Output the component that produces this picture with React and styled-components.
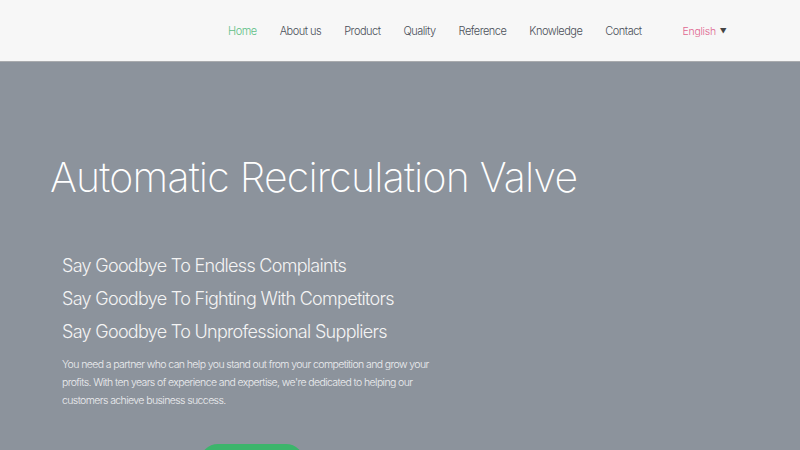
import React from "react";
import styled, { createGlobalStyle } from "styled-components";

const GlobalStyle = createGlobalStyle`
  html, body {
    margin: 0;
    padding: 0;
    overflow: hidden;
  }
  body {
    font-family: Inter, "Noto Sans", sans-serif;
    background: #8c939c;
  }
  * { box-sizing: border-box; }
`;

const Header = styled.header`
  height: 62px;
  background: #f7f7f7;
  border-bottom: 1px solid #a9abae;
  display: flex;
  align-items: center;
  padding-left: 228px;
`;

const Nav = styled.nav`
  display: flex;
  align-items: center;
  gap: 23px;
`;

const NavLink = styled.a`
  font-size: 11px;
  font-weight: 300;
  color: ${(p) => (p.active ? "#5fbf86" : "#4a4f57")};
  text-decoration: none;
  letter-spacing: -0.5px;
`;

const Lang = styled.div`
  margin-left: 41px;
  margin-top: 2px;
  font-size: 10.5px;
  font-weight: 300;
  color: #e0668f;
  display: flex;
  align-items: center;
  gap: 4px;
  letter-spacing: -0.3px;
`;

const Caret = styled.span`
  color: #444;
  font-size: 7px;
`;

const Hero = styled.section`
  height: 388px;
  background: #8c939c;
  padding: 90px 0 0 50px;
  color: #fff;
`;

const Title = styled.h1`
  margin: 0;
  font-size: 41px;
  font-weight: 200;
  letter-spacing: -0.8px;
  line-height: 50px;
`;

const Content = styled.div`
  padding: 47px 0 0 12px;
`;

const Slogan = styled.p`
  margin: 0;
  font-size: 18px;
  font-weight: 300;
  line-height: 33px;
  color: #f4f4f4;
  letter-spacing: -0.7px;
`;

const Text = styled.p`
  margin: 8px 0 0;
  width: 378px;
  font-size: 10.5px;
  font-weight: 300;
  line-height: 18px;
  color: #eceef0;
  letter-spacing: -0.6px;
`;

const Button = styled.a`
  display: block;
  margin: 34px 0 0 138px;
  width: 104px;
  height: 36px;
  border-radius: 18px;
  background: #3cb56b;
`;

const links = ["Home", "About us", "Product", "Quality", "Reference", "Knowledge", "Contact"];

export default function App() {
  return (
    <>
      <GlobalStyle />
      <Header>
        <Nav>
          {links.map((l, i) => (
            <NavLink key={l} active={i === 0 ? 1 : 0}>{l}</NavLink>
          ))}
        </Nav>
        <Lang>
          English <Caret>▼</Caret>
        </Lang>
      </Header>
      <Hero>
        <Title>Automatic Recirculation Valve</Title>
        <Content>
          <Slogan>Say Goodbye To Endless Complaints</Slogan>
          <Slogan>Say Goodbye To Fighting With Competitors</Slogan>
          <Slogan>Say Goodbye To Unprofessional Suppliers</Slogan>
          <Text>
            You need a partner who can help you stand out from your competition and grow your
            profits. With ten years of experience and expertise, we're dedicated to helping our
            customers achieve business success.
          </Text>
          <Button />
        </Content>
      </Hero>
    </>
  );
}
